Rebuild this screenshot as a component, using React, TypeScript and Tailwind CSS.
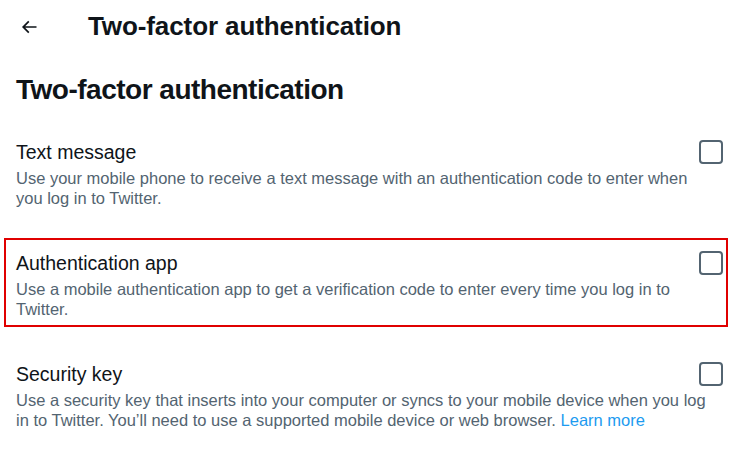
import React from "react";

const options = [
  {
    title: "Text message",
    desc: "Use your mobile phone to receive a text message with an authentication code to enter when you log in to Twitter.",
    highlight: false,
    link: false,
  },
  {
    title: "Authentication app",
    desc: "Use a mobile authentication app to get a verification code to enter every time you log in to Twitter.",
    highlight: true,
    link: false,
  },
  {
    title: "Security key",
    desc: "Use a security key that inserts into your computer or syncs to your mobile device when you log in to Twitter. You\u2019ll need to use a supported mobile device or web browser.",
    highlight: false,
    link: true,
  },
];

export default function App() {
  return (
    <div
      className="w-[745px] h-[469px] bg-white text-[#0f1419] overflow-hidden"
      style={{ fontFamily: '"Liberation Sans", Arial, sans-serif' }}
    >
      {/* top bar */}
      <div className="h-[53px] flex items-center pl-[19px]">
        <svg viewBox="0 0 24 24" className="w-5 h-5" fill="currentColor">
          <path d="M7.414 13l5.043 5.04-1.414 1.42L3.586 12l7.457-7.46 1.414 1.42L7.414 11H21v2H7.414z" />
        </svg>
        <h1 className="ml-[49px] text-[26px] font-bold tracking-[-0.1px]">Two-factor authentication</h1>
      </div>

      <h2 className="px-4 mt-[21px] text-[28px] font-extrabold leading-[32px] tracking-[-0.5px]">
        Two-factor authentication
      </h2>

      <div className="mt-[21px] flex flex-col gap-[22px]">
        {options.map((o) => (
          <div
            key={o.title}
            className={`ml-1 mr-[17px] pl-[10px] pr-[3px] pt-[11px] pb-[6px] border-2 ${
              o.highlight ? "border-[#e00000]" : "border-transparent"
            }`}
          >
            <div className="flex items-center justify-between h-6">
              <span className="text-[19.5px] leading-6">{o.title}</span>
              <span className="w-6 h-6 rounded-[4px] border-2 border-[#536471]" />
            </div>
            <p className="mt-[4px] mr-[10px] text-[16.5px] leading-5 text-[#536471]">
              {o.desc}
              {o.link && (
                <>
                  {" "}
                  <span className="text-[#1d9bf0]">Learn more</span>
                </>
              )}
            </p>
          </div>
        ))}
      </div>
    </div>
  );
}
